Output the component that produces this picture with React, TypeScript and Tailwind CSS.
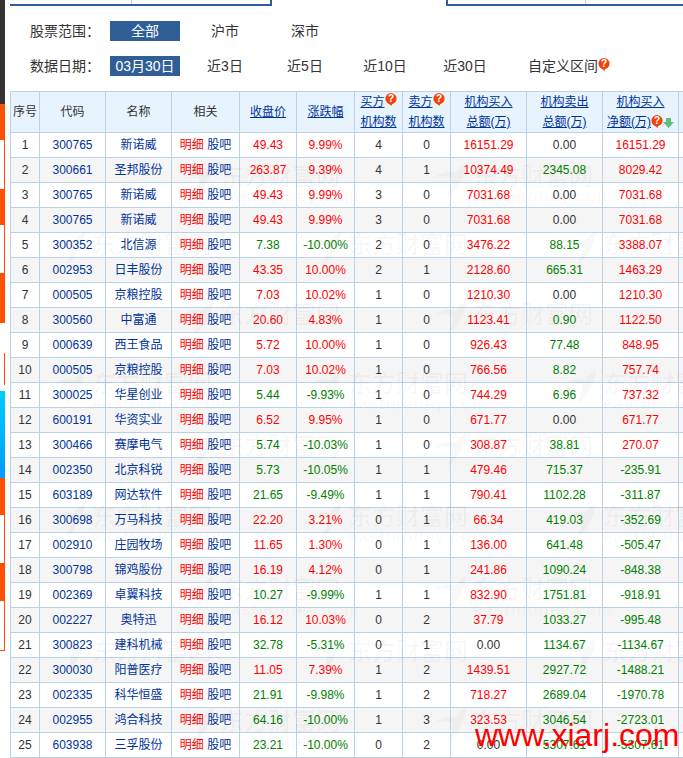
const FONT = "font-['Liberation_Sans','Noto_Sans_CJK_SC',sans-serif]";

type Row = [string, string, string, string, string, string, string, string];
const rows: Row[] = [
  ["300765", "新诺威", "49.43", "9.99%", "4", "0", "16151.29", "0.00|16151.29"],
  ["300661", "圣邦股份", "263.87", "9.39%", "4", "1", "10374.49", "2345.08|8029.42"],
  ["300765", "新诺威", "49.43", "9.99%", "3", "0", "7031.68", "0.00|7031.68"],
  ["300765", "新诺威", "49.43", "9.99%", "3", "0", "7031.68", "0.00|7031.68"],
  ["300352", "北信源", "7.38", "-10.00%", "2", "0", "3476.22", "88.15|3388.07"],
  ["002953", "日丰股份", "43.35", "10.00%", "2", "1", "2128.60", "665.31|1463.29"],
  ["000505", "京粮控股", "7.03", "10.02%", "1", "0", "1210.30", "0.00|1210.30"],
  ["300560", "中富通", "20.60", "4.83%", "1", "0", "1123.41", "0.90|1122.50"],
  ["000639", "西王食品", "5.72", "10.00%", "1", "0", "926.43", "77.48|848.95"],
  ["000505", "京粮控股", "7.03", "10.02%", "1", "0", "766.56", "8.82|757.74"],
  ["300025", "华星创业", "5.44", "-9.93%", "1", "0", "744.29", "6.96|737.32"],
  ["600191", "华资实业", "6.52", "9.95%", "1", "0", "671.77", "0.00|671.77"],
  ["300466", "赛摩电气", "5.74", "-10.03%", "1", "0", "308.87", "38.81|270.07"],
  ["002350", "北京科锐", "5.73", "-10.05%", "1", "1", "479.46", "715.37|-235.91"],
  ["603189", "网达软件", "21.65", "-9.49%", "1", "1", "790.41", "1102.28|-311.87"],
  ["300698", "万马科技", "22.20", "3.21%", "0", "1", "66.34", "419.03|-352.69"],
  ["002910", "庄园牧场", "11.65", "1.30%", "0", "1", "136.00", "641.48|-505.47"],
  ["300798", "锦鸡股份", "16.19", "4.12%", "0", "1", "241.86", "1090.24|-848.38"],
  ["002369", "卓翼科技", "10.27", "-9.99%", "1", "1", "832.90", "1751.81|-918.91"],
  ["002227", "奥特迅", "16.12", "10.03%", "0", "2", "37.79", "1033.27|-995.48"],
  ["300823", "建科机械", "32.78", "-5.31%", "0", "1", "0.00", "1134.67|-1134.67"],
  ["300030", "阳普医疗", "11.05", "7.39%", "1", "2", "1439.51", "2927.72|-1488.21"],
  ["002335", "科华恒盛", "21.91", "-9.98%", "1", "2", "718.27", "2689.04|-1970.78"],
  ["002955", "鸿合科技", "64.16", "-10.00%", "1", "3", "323.53", "3046.54|-2723.01"],
  ["603938", "三孚股份", "23.21", "-10.00%", "0", "2", "0.00", "5307.61|-5307.61"],
];

const RED = "text-[#ff0000]";
const GREEN = "text-[#007f00]";
const DARK = "text-[#333333]";
const LINK = "text-[#003399]";

function Help({ className = "" }: { className?: string }) {
  return (
    <svg viewBox="0 0 12 13" className={`inline-block w-[12px] h-[13px] ${className}`}>
      <circle cx="6" cy="5.6" r="5.6" fill="#f2430c" />
      <path d="M3 10 L6.5 13 L7.5 10 Z" fill="#f2430c" />
      <text x="6" y="9.2" textAnchor="middle" fontSize="10" fontWeight="700" fill="#ffffff" fontFamily="Liberation Sans">?</text>
    </svg>
  );
}

function DownArrow() {
  return (
    <svg viewBox="0 0 11 10" className="inline-block w-[11px] h-[10px]">
      <path d="M3 0 H8 V4 H11 L5.5 10 L0 4 H3 Z" fill="#5fbf7f" />
    </svg>
  );
}

function Mark({ top, left, en }: { top: number; left: number; en?: boolean }) {
  return (
    <div className="absolute flex items-start gap-[6px]" style={{ top, left: left - 40 }}>
      <svg viewBox="0 0 34 34" className="w-[34px] h-[34px] mt-[-2px]">
        <path d="M2 14 C10 8 18 8 22 10 C26 4 30 2 33 0 C32 12 26 26 14 34 C18 26 20 20 19 15 C14 13 8 13 2 14 Z" fill="#000000" fillOpacity="0.028" />
      </svg>
      <div className="flex flex-col">
        <span className="text-[24px] leading-[24px] font-bold text-[#000000]/[0.028] whitespace-nowrap">东方财富网</span>
        {en && <span className="text-[17px] leading-[15px] font-bold tracking-[1px] text-[#000000]/[0.028] whitespace-nowrap">eastmoney.com</span>}
      </div>
    </div>
  );
}

const marks: { top: number; left: number; en?: boolean }[] = [
  { top: 165, left: 220, en: true }, { top: 165, left: 473, en: true },
  { top: 233, left: 92 }, { top: 233, left: 348 }, { top: 233, left: 603 },
  { top: 303, left: 220 }, { top: 303, left: 473 },
  { top: 372, left: 92, en: true }, { top: 372, left: 348, en: true }, { top: 372, left: 603, en: true },
  { top: 435, left: 220 }, { top: 435, left: 473 },
  { top: 505, left: 92, en: true }, { top: 505, left: 348, en: true }, { top: 505, left: 603, en: true },
  { top: 578, left: 220, en: true }, { top: 578, left: 473, en: true },
  { top: 640, left: 92 }, { top: 640, left: 348 }, { top: 640, left: 603 },
  { top: 710, left: 220, en: true }, { top: 710, left: 473, en: true },
];

function Sidebar() {
  const bordered = "bg-white border-r border-[#ff4f00]";
  return (
    <div className="w-[5px] shrink-0 flex flex-col">
      <div className="h-[104px] bg-[#333333]" />
      <div className="h-[36px] bg-[#ff4f00]" />
      <div className={`h-[49px] ${bordered}`} />
      <div className="h-[36px] bg-[#ff4f00]" />
      <div className={`h-[48px] ${bordered}`} />
      <div className="h-[50px] bg-[#ff4f00]" />
      <div className="h-[30px] bg-white" />
      <div className="h-[32px] bg-white border-r border-[#ff4f00]" />
      <div className="h-[6px] bg-white" />
      <div className="h-[87px] bg-gradient-to-b from-[#00ccff] to-[#0099ff]" />
      <div className="h-[37px] bg-[#ff4f00]" />
      <div className={`h-[48px] ${bordered}`} />
      <div className="h-[38px] bg-[#ff4f00]" />
      <div className={`h-[50px] ${bordered} border-b`} />
    </div>
  );
}

function TopTabs() {
  return (
    <div className="h-[6px] flex">
      <div className="ml-[5px] w-[262px] h-[6px] border-r-2 border-b-2 border-[#2f5f96] flex">
        <div className="ml-[121px] w-px h-[4px] bg-[#c5d5e6]" />
      </div>
      <div className="ml-[174px] flex-1 h-[6px] border-l-2 border-b-2 border-[#2f5f96] flex">
        <div className="ml-[137px] w-px h-[4px] bg-[#c5d5e6]" />
      </div>
    </div>
  );
}

function Chip({ children }: { children: React.ReactNode }) {
  return <span className="w-[70px] h-[20px] mr-[10px] bg-[#2f5f96] text-white text-center leading-[20px]">{children}</span>;
}
function Opt({ children }: { children: React.ReactNode }) {
  return <span className="w-[70px] h-[20px] mr-[10px] text-center leading-[20px] whitespace-nowrap">{children}</span>;
}

function Filters() {
  return (
    <div className={`pl-[25px] pt-[15px] text-[14px] ${DARK} flex flex-col gap-[15px]`}>
      <div className="flex h-[20px]">
        <span className="w-[80px] leading-[20px]">股票范围：</span>
        <Chip>全部</Chip>
        <Opt>沪市</Opt>
        <Opt>深市</Opt>
      </div>
      <div className="flex h-[20px]">
        <span className="w-[80px] leading-[20px]">数据日期：</span>
        <Chip>03月30日</Chip>
        <Opt>近3日</Opt>
        <Opt>近5日</Opt>
        <Opt>近10日</Opt>
        <Opt>近30日</Opt>
        <span className="ml-[18px] leading-[20px] whitespace-nowrap flex items-start">
          自定义区间<Help className="mt-[2px]" />
        </span>
      </div>
    </div>
  );
}

function Th({ children }: { children?: React.ReactNode }) {
  return <th className="border border-[#b9d2e8] bg-[#e8f4fd] font-normal leading-[20px] p-0 text-center whitespace-nowrap">{children}</th>;
}
function A({ children }: { children: React.ReactNode }) {
  return <span className={`underline ${LINK}`}>{children}</span>;
}

function sign(v: string) {
  return v.startsWith("-") ? GREEN : RED;
}

function DataTable() {
  const td = "border border-[#b9d2e8] p-0 text-center whitespace-nowrap h-[25px] leading-[24px]";
  return (
    <div className="mt-[15px] ml-[5px] overflow-hidden">
      <table className={`table-fixed border-collapse w-[709px] text-[12px] ${DARK}`}>
        <colgroup>
          <col className="w-[29px]" />
          <col className="w-[66px]" />
          <col className="w-[66px]" />
          <col className="w-[68px]" />
          <col className="w-[57px]" />
          <col className="w-[58px]" />
          <col className="w-[48px]" />
          <col className="w-[48px]" />
          <col className="w-[76px]" />
          <col className="w-[76px]" />
          <col className="w-[76px]" />
          <col className="w-[41px]" />
        </colgroup>
        <thead>
          <tr className="h-[41px]">
            <Th>序号</Th>
            <Th>代码</Th>
            <Th>名称</Th>
            <Th>相关</Th>
            <Th><A>收盘价</A></Th>
            <Th><A>涨跌幅</A></Th>
            <Th><A>买方</A><Help className="align-top mt-px" /><br /><A>机构数</A></Th>
            <Th><A>卖方</A><Help className="align-top mt-px" /><br /><A>机构数</A></Th>
            <Th><A>机构买入</A><br /><A>总额(万)</A></Th>
            <Th><A>机构卖出</A><br /><A>总额(万)</A></Th>
            <Th><A>机构买入</A><br /><A>净额(万)</A><Help className="align-top mt-[3px]" /><DownArrow /></Th>
            <Th />
          </tr>
        </thead>
        <tbody>
          {rows.map((r, i) => {
            const [sell, net] = r[7].split("|");
            const cc = sign(r[3]);
            return (
              <tr key={i} className={i % 2 === 1 ? "bg-[#f5f5f5]" : "bg-white"}>
                <td className={td}>{i + 1}</td>
                <td className={`${td} ${LINK}`}>{r[0]}</td>
                <td className={`${td} ${LINK}`}>{r[1]}</td>
                <td className={td}>
                  <span className={RED}>明细</span> <span className={LINK}>股吧</span>
                </td>
                <td className={`${td} ${cc}`}>{r[2]}</td>
                <td className={`${td} ${cc}`}>{r[3]}</td>
                <td className={td}>{r[4]}</td>
                <td className={td}>{r[5]}</td>
                <td className={`${td} ${r[6] === "0.00" ? DARK : RED}`}>{r[6]}</td>
                <td className={`${td} ${sell === "0.00" ? DARK : GREEN}`}>{sell}</td>
                <td className={`${td} ${sign(net)}`}>{net}</td>
                <td className={td} />
              </tr>
            );
          })}
        </tbody>
      </table>
    </div>
  );
}

export default function App() {
  return (
    <div className={`relative w-[683px] h-[758px] overflow-hidden bg-white flex ${FONT}`}>
      <Sidebar />
      <div className="flex-1 min-w-0">
        <TopTabs />
        <Filters />
        <DataTable />
      </div>
      <div className="absolute inset-0 pointer-events-none overflow-hidden">
        {marks.map((m, i) => (
          <Mark key={i} {...m} />
        ))}
      </div>
      <div className="absolute left-[475px] top-[715px] text-[32px] leading-[40px] text-[#ff0000] whitespace-nowrap">www.xiarj.com</div>
    </div>
  );
}
